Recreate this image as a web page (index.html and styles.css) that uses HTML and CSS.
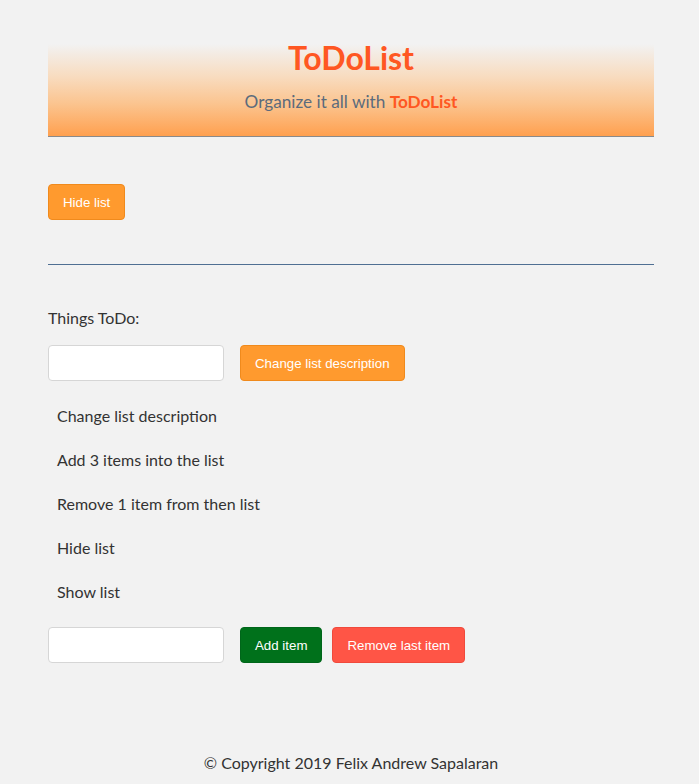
FILE: index.html
```html
<!DOCTYPE html>
<html>
<head>
<meta charset="utf-8">
<link rel="stylesheet" href="styles.css">
</head>
<body>
<div class="container">
  <header class="header">
    <h1 class="title">ToDoList</h1>
    <p class="subtitle">Organize it all with <strong class="brand">ToDoList</strong></p>
  </header>

  <div class="toggle-row">
    <button class="btn btn-orange">Hide list</button>
  </div>

  <hr class="divider">

  <section class="list-section">
    <p class="list-title">Things ToDo:</p>
    <div class="form-row">
      <input class="text-input" type="text">
      <button class="btn btn-orange">Change list description</button>
    </div>
    <ul class="items">
      <li>Change list description</li>
      <li>Add 3 items into the list</li>
      <li>Remove 1 item from then list</li>
      <li>Hide list</li>
      <li>Show list</li>
    </ul>
    <div class="form-row">
      <input class="text-input" type="text">
      <button class="btn btn-green">Add item</button>
      <button class="btn btn-red">Remove last item</button>
    </div>
  </section>

  <footer class="footer">© Copyright 2019 Felix Andrew Sapalaran</footer>
</div>
</body>
</html>
```

FILE: styles.css
```css
html, body {
  margin: 0;
  padding: 0;
  background: #f2f2f2;
}
body {
  font-family: Lato, "Open Sans", sans-serif;
  color: #333333;
}
.container {
  width: 606px;
  margin: 0 0 0 48px;
  padding-top: 44px;
}
.header {
  height: 92px;
  border-bottom: 1px solid #8a8a8a;
  background: linear-gradient(to bottom, #f2f2f2 0%, #f8dcc0 35%, #fbc48f 65%, #ffa04f 100%);
  text-align: center;
}
.title {
  margin: 0;
  font-size: 32px;
  line-height: 28px;
  font-weight: 700;
  color: #ff5722;
}
.subtitle {
  margin: 20px 0 0;
  font-size: 17.2px;
  line-height: 20px;
  color: #5b6b7c;
}
.brand {
  color: #ff5722;
  font-weight: 700;
}
.toggle-row {
  padding-top: 47px;
}
.btn {
  font-family: "Liberation Sans", Arial, sans-serif;
  font-size: 13.3px;
  color: #ffffff;
  height: 36px;
  padding: 0 14px;
  border-radius: 4px;
  border: 1px solid transparent;
  cursor: pointer;
}
.btn-orange {
  background: #ff9a2e;
  border-color: #f08a1c;
}
.btn-green {
  background: #00711b;
  border-color: #00661a;
}
.btn-red {
  background: #ff5546;
  border-color: #f04a3c;
}
.divider {
  margin: 44px 0 0;
  border: 0;
  border-top: 1px solid #4f6f93;
  height: 0;
}
.list-section {
  padding-top: 43px;
}
.list-title {
  margin: 0;
  font-size: 16px;
  line-height: 20px;
}
.form-row {
  display: flex;
  align-items: center;
  gap: 10px;
  margin-top: 17px;
}
.text-input {
  width: 176px;
  height: 36px;
  box-sizing: border-box;
  border: 1px solid #d6d6d6;
  border-radius: 4px;
  background: #ffffff;
  margin-right: 6px;
}
.items {
  list-style: none;
  margin: 0;
  padding: 25px 0 0 9px;
}
.items li {
  font-size: 16px;
  line-height: 20px;
  margin-bottom: 24px;
}
.items li:last-child {
  margin-bottom: 25px;
}
.items + .form-row {
  margin-top: 0;
}
.footer {
  text-align: center;
  font-size: 16px;
  line-height: 20px;
  padding-top: 90px;
  padding-bottom: 20px;
}
```
